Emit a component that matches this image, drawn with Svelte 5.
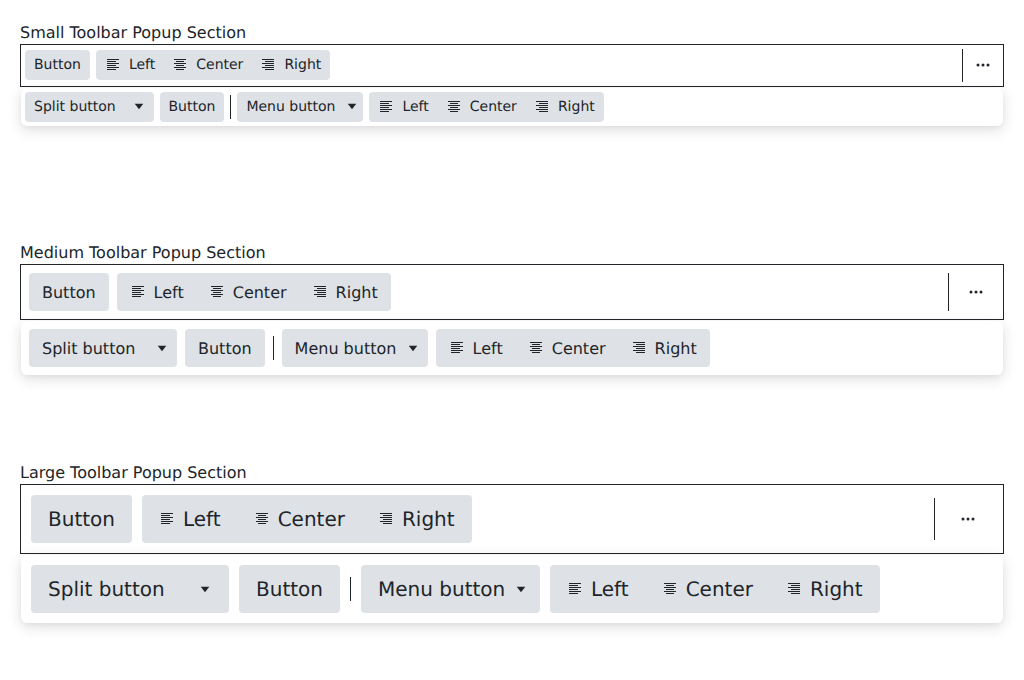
<script>
  const sections = [
    { name: 'Small', cls: 'small' },
    { name: 'Medium', cls: 'medium' },
    { name: 'Large', cls: 'large' }
  ];
  const aligns = [
    { label: 'Left', xs: [0, 0, 0, 0, 0, 0], ws: [12, 9, 12, 9, 12, 9] },
    { label: 'Center', xs: [0, 2, 0, 2, 0, 2], ws: [12, 8, 12, 8, 12, 8] },
    { label: 'Right', xs: [0, 3, 0, 3, 0, 3], ws: [12, 9, 12, 9, 12, 9] }
  ];
</script>

{#snippet group()}
  <div class="group">
    {#each aligns as a}
      <div class="item">
        <svg class="icon" width="16" height="16" viewBox="0 0 16 16" aria-hidden="true">
          {#each a.xs as x, i}
            <rect x={2 + x} y={2 + i * 2} width={a.ws[i]} height="1" fill="#212529" />
          {/each}
        </svg>
        <span>{a.label}</span>
      </div>
    {/each}
  </div>
{/snippet}

{#snippet caret()}
  <svg class="caret" width="10" height="7" viewBox="0 0 10 7" aria-hidden="true">
    <path d="M0.75 0.75h8.5L5 6.25z" fill="#212529" />
  </svg>
{/snippet}

<main>
  {#each sections as s}
    <section class={s.cls}>
      <h2>{s.name} Toolbar Popup Section</h2>
      <div class="bar">
        <div class="btn">Button</div>
        {@render group()}
        <div class="end">
          <div class="vline"></div>
          <div class="more">
            <svg width="14" height="4" viewBox="0 0 14 4" aria-hidden="true">
              <circle cx="2" cy="2" r="1.5" fill="#212529" />
              <circle cx="7" cy="2" r="1.5" fill="#212529" />
              <circle cx="12" cy="2" r="1.5" fill="#212529" />
            </svg>
          </div>
        </div>
      </div>
      <div class="popup">
        <div class="btn split"><span>Split button</span>{@render caret()}</div>
        <div class="btn">Button</div>
        <div class="sep"></div>
        <div class="btn menu"><span>Menu button</span>{@render caret()}</div>
        {@render group()}
      </div>
    </section>
  {/each}
</main>

<style>
  :global(body) {
    margin: 0;
    background: #fff;
    font-family: "DejaVu Sans", sans-serif;
    color: #212529;
    text-rendering: geometricPrecision;
  }
  main {
    padding: 24px 20px 0;
  }
  section {
    height: 220px;
  }
  h2 {
    margin: 0;
    font-size: 16px;
    font-weight: 400;
    line-height: 18px;
    height: 20px;
    color: #212529;
  }
  .bar {
    display: flex;
    align-items: center;
    border: 1px solid #212529;
    background: #fff;
    box-sizing: border-box;
  }
  .popup {
    display: flex;
    align-items: center;
    background: #fff;
    border-radius: 6px;
    box-shadow: 0 2px 4px rgba(33, 37, 41, 0.04), 0 4px 14px rgba(33, 37, 41, 0.14);
    box-sizing: border-box;
    margin: 1px 1px 0;
  }
  .btn,
  .group {
    display: flex;
    align-items: center;
    flex: none;
    background: #dee2e6;
    border-radius: 4px;
    white-space: nowrap;
    box-sizing: border-box;
  }
  .item {
    display: flex;
    align-items: center;
  }
  .icon,
  .caret {
    display: block;
    flex: none;
  }
  .end {
    margin-left: auto;
    display: flex;
    align-items: center;
  }
  .vline {
    width: 1px;
    background: #212529;
  }
  .sep {
    width: 1px;
    height: 24px;
    background: #212529;
    flex: none;
  }
  .more {
    display: flex;
    align-items: center;
    justify-content: center;
  }
  .more svg {
    display: block;
  }

  .small .bar {
    height: 43px;
    padding: 0 4px 1px;
    gap: 6px;
  }
  .small .popup {
    height: 38px;
    padding: 0 4px;
    gap: 6px;
  }
  .small .btn,
  .small .group {
    font-size: 14px;
    height: 30px;
  }
  .small .popup .btn,
  .small .popup .group {
    padding-bottom: 1px;
  }
  .small .btn {
    padding-left: 9px;
    padding-right: 9px;
  }
  .small .group {
    padding-left: 9px;
    padding-right: 9px;
    gap: 17px;
  }
  .small .item {
    gap: 8px;
  }
  .small .split {
    width: 128.5px;
    justify-content: space-between;
    padding-right: 10px;
  }
  .small .menu {
    width: 126px;
    justify-content: space-between;
    padding-right: 6px;
  }
  .small .vline {
    height: 33px;
    margin-right: 13px;
  }
  .small .more {
    margin-right: 9px;
  }

  .medium .bar {
    height: 56px;
    padding: 0 8px;
    gap: 8px;
  }
  .medium .popup {
    height: 54px;
    padding: 0 8px;
    gap: 8px;
  }
  .medium .btn,
  .medium .group {
    font-size: 16px;
    height: 38px;
  }
  .medium .btn {
    padding: 0 13px;
  }
  .medium .group {
    padding: 0 13px;
    gap: 25px;
  }
  .medium .item {
    gap: 8px;
  }
  .medium .split {
    width: 148px;
    justify-content: space-between;
    padding-right: 10px;
  }
  .medium .menu {
    width: 146px;
    justify-content: space-between;
    padding-right: 10px;
  }
  .medium .vline {
    height: 38px;
    margin-right: 20px;
  }
  .medium .more {
    margin-right: 12px;
  }

  .large .bar {
    height: 70px;
    padding: 0 10px;
    gap: 10px;
  }
  .large .popup {
    height: 68px;
    padding: 0 10px;
    gap: 10px;
  }
  .large .btn,
  .large .group {
    font-size: 20px;
    height: 48px;
  }
  .large .btn {
    padding: 0 17px;
  }
  .large .group {
    padding: 0 17px;
    gap: 33px;
  }
  .large .item {
    gap: 8px;
  }
  .large .split {
    width: 198px;
    justify-content: space-between;
    padding-right: 19px;
  }
  .large .menu {
    width: 179px;
    justify-content: space-between;
    padding-right: 14px;
  }
  .large .vline {
    height: 42px;
    margin-right: 26px;
  }
  .large .more {
    margin-right: 18px;
  }
</style>
